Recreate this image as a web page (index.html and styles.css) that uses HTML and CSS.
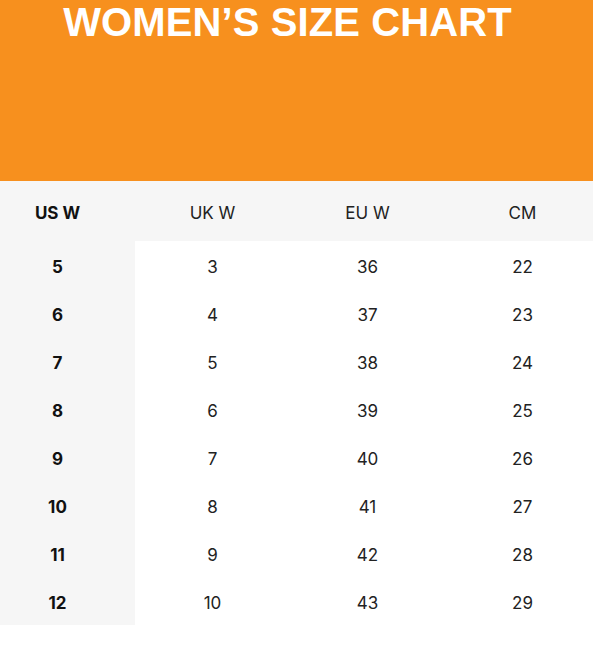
FILE: index.html
```html
<!DOCTYPE html>
<html lang="en">
<head>
<meta charset="utf-8">
<title>Women's Size Chart</title>
<link rel="stylesheet" href="styles.css">
</head>
<body>
<main class="page">
  <header class="banner">
    <h1 class="title">WOMEN’S SIZE CHART</h1>
  </header>
  <table class="chart">
    <thead>
      <tr><th class="key">US W</th><th>UK W</th><th>EU W</th><th>CM</th></tr>
    </thead>
    <tbody>
      <tr><td class="key">5</td><td>3</td><td>36</td><td>22</td></tr>
      <tr><td class="key">6</td><td>4</td><td>37</td><td>23</td></tr>
      <tr><td class="key">7</td><td>5</td><td>38</td><td>24</td></tr>
      <tr><td class="key">8</td><td>6</td><td>39</td><td>25</td></tr>
      <tr><td class="key">9</td><td>7</td><td>40</td><td>26</td></tr>
      <tr><td class="key">10</td><td>8</td><td>41</td><td>27</td></tr>
      <tr><td class="key">11</td><td>9</td><td>42</td><td>28</td></tr>
      <tr><td class="key">12</td><td>10</td><td>43</td><td>29</td></tr>
    </tbody>
  </table>
</main>
</body>
</html>
```

FILE: styles.css
```css
html, body {
  margin: 0;
  padding: 0;
  overflow: hidden;
  background: #ffffff;
}
body {
  width: 593px;
  font-family: Inter, "Liberation Sans", sans-serif;
  color: #222222;
}
.page {
  width: 620px;
  margin-left: -20px;
}
.banner {
  background: #f7901e;
  height: 181px;
  text-align: center;
}
.title {
  margin: 0;
  padding-right: 5px;
  font-family: "Liberation Sans", Arial, sans-serif;
  font-weight: 700;
  font-size: 40px;
  line-height: normal;
  color: #ffffff;
  letter-spacing: 0.1px;
}
.chart {
  border-collapse: collapse;
  table-layout: fixed;
  width: 620px;
  font-size: 17px;
}
.chart th,
.chart td {
  padding: 3px 0 0 0;
  text-align: center;
  width: 155px;
  font-weight: 400;
  box-sizing: border-box;
}
.chart th {
  height: 60px;
  background: #f6f6f6;
}
.chart td {
  height: 48px;
}
.chart .key {
  background: #f6f6f6;
  font-weight: 700;
  color: #111111;
}
```
